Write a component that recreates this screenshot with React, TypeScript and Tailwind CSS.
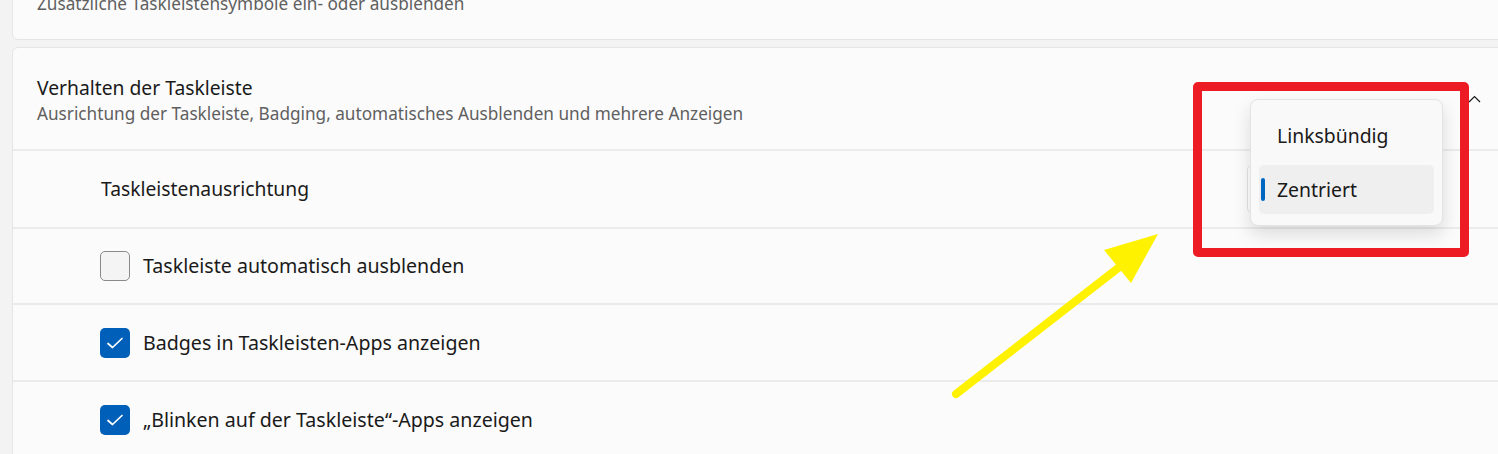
const rows = [
  { label: "Taskleiste automatisch ausblenden", checked: false, h: "h-[76px]" },
  { label: "Badges in Taskleisten-Apps anzeigen", checked: true, h: "h-[77px]" },
  { label: "„Blinken auf der Taskleiste“-Apps anzeigen", checked: true, h: "h-[77px]" },
];

const Chevron = () => (
  <svg width="13" height="8" viewBox="0 0 13 8" fill="none">
    <path d="M1 7L6.5 1.5L12 7" stroke="#1b1b1b" strokeWidth="1.2" />
  </svg>
);

const Checkbox = ({ checked }: { checked: boolean }) =>
  checked ? (
    <div className="w-[30px] h-[30px] rounded-[5px] bg-[#005fb8] flex items-center justify-center">
      <svg width="18" height="14" viewBox="0 0 18 14" fill="none">
        <path d="M2 7.5L6.5 11.5L16 2.5" stroke="white" strokeWidth="1.7" strokeLinecap="round" strokeLinejoin="round" />
      </svg>
    </div>
  ) : (
    <div className="w-[30px] h-[30px] rounded-[5px] border-[1.5px] border-[#8a8a8a] bg-[#f4f4f4]" />
  );

const Header = ({ title, sub, chevron }: { title: string; sub: string; chevron?: boolean }) => (
  <div className="h-[101px] flex items-center justify-between pl-[24px] pr-[30px]">
    <div className="pt-[3px]">
      <p className="text-[19.3px] leading-[25px] text-[#1a1a1a]">{title}</p>
      <p className="text-[17.2px] leading-[22px] mt-[3px] text-[#5f5f5f]">{sub}</p>
    </div>
    {chevron && <Chevron />}
  </div>
);

export default function App() {
  return (
    <div className="relative w-[1498px] h-[454px] overflow-hidden bg-[#f3f3f3] font-['Noto_Sans',sans-serif]">
      <div className="pl-[12px] flex flex-col gap-[7px]">
        <div className="w-[1500px] -mt-[63px] rounded-b-[6px] border border-[#e5e5e5] bg-[#fbfbfb]">
          <Header title="Andere Taskleistensymbole" sub="Zusätzliche Taskleistensymbole ein- oder ausblenden" />
        </div>

        <div className="w-[1500px] rounded-t-[6px] border border-[#e5e5e5] bg-[#fbfbfb]">
          <Header
            title="Verhalten der Taskleiste"
            sub="Ausrichtung der Taskleiste, Badging, automatisches Ausblenden und mehrere Anzeigen"
            chevron
          />
          <div className="h-[78px] border-t-2 border-[#ebebeb] flex items-center justify-between pl-[88px] pr-[74px]">
            <span className="text-[19.3px] text-[#1a1a1a]">Taskleistenausrichtung</span>
            <div className="w-[190px] h-[48px] rounded-[5px] border border-[#e3e3e3] bg-white" />
          </div>
          {rows.map(r => (
            <div key={r.label} className={`${r.h} border-t-2 border-[#ebebeb] flex items-center gap-[13px] pl-[87px]`}>
              <Checkbox checked={r.checked} />
              <span className="text-[19.6px] text-[#1a1a1a]">{r.label}</span>
            </div>
          ))}
        </div>
      </div>

      {/* dropdown menu */}
      <div className="absolute left-[1250px] top-[99px] w-[193px] h-[127px] rounded-[8px] border border-[#e3e3e3] bg-[#f9f9f9] shadow-[0_8px_18px_rgba(0,0,0,0.13)] px-[8px] py-[11px] flex flex-col gap-[5px]">
        <div className="h-[50px] flex items-center pl-[18px] text-[19.4px] text-[#1a1a1a]">Linksbündig</div>
        <div className="relative h-[50px] rounded-[5px] bg-[#efefef] flex items-center pl-[18px] text-[19.4px] text-[#1a1a1a]">
          <span className="absolute left-[2px] top-[13px] w-[4px] h-[23px] rounded-full bg-[#0067c0]" />
          Zentriert
        </div>
      </div>

      {/* annotations */}
      <div className="absolute left-[1193px] top-[82px] w-[276px] h-[175px] border-[9px] border-[#ed1c24] rounded-[5px]" />
      <svg className="absolute left-0 top-0 pointer-events-none" width="1498" height="454">
        <line x1="956" y1="394" x2="1122" y2="265" stroke="#fff200" strokeWidth="8" strokeLinecap="round" />
        <polygon points="1158,234 1104,250 1131,283" fill="#fff200" />
      </svg>
    </div>
  );
}
